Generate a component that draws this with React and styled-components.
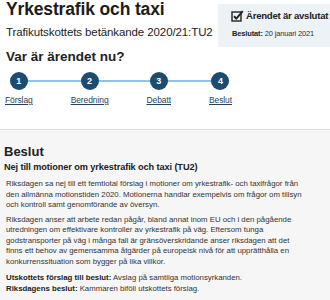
import React from "react";
import styled, { createGlobalStyle } from "styled-components";

const Global = createGlobalStyle`
  html, body { margin: 0; padding: 0; background: #fff; }
  body { font-family: "Liberation Sans", Arial, sans-serif; color: #222; width: 330px; height: 300px; overflow: hidden; }
`;

const Page = styled.div`
  width: 330px;
`;

const Top = styled.header`
  display: flex;
  justify-content: space-between;
  align-items: flex-start;
`;

const TitleBlock = styled.div`
  padding: 0 0 0 6px;
`;

const Title = styled.h1`
  margin: 0;
  font-size: 17.5px;
  line-height: 19px;
  font-weight: 700;
  color: #1c1c1c;
  letter-spacing: -0.15px;
`;

const Subtitle = styled.div`
  margin-top: 7px;
  font-size: 11.5px;
  line-height: 13px;
  color: #222;
  letter-spacing: -0.1px;
`;

const StatusBox = styled.aside`
  margin-top: 4px;
  width: 98px;
  height: 38px;
  padding: 5px 0 0 14px;
  box-sizing: content-box;
  background: #edf2f7;
`;

const StatusHead = styled.div`
  display: flex;
  align-items: center;
  gap: 2px;
  margin-left: -1px;
  font-size: 9.6px;
  line-height: 13px;
  font-weight: 700;
  color: #222;
  letter-spacing: -0.25px;
  white-space: nowrap;
`;

const StatusDate = styled.div`
  margin-top: 7px;
  font-size: 7.5px;
  line-height: 10px;
  color: #333;
  white-space: nowrap;
  letter-spacing: -0.15px;
  b { font-weight: 700; color: #222; }
`;

const Heading = styled.h2`
  margin: 2px 0 0 6px;
  font-size: 13.5px;
  line-height: 16px;
  font-weight: 700;
  color: #222;
`;

const Stepper = styled.ol`
  position: relative;
  display: inline-flex;
  gap: 38px;
  list-style: none;
  margin: 7px 0 0 5px;
  padding: 0;
  &::before {
    content: "";
    position: absolute;
    left: 14px;
    right: 12px;
    top: 8px;
    height: 2px;
    background: #8fc3ea;
  }
`;

const Step = styled.li`
  position: relative;
  display: flex;
  flex-direction: column;
  align-items: center;
`;

const Circle = styled.span`
  width: 18px;
  height: 18px;
  border-radius: 50%;
  background: #1c4c70;
  color: #fff;
  font-size: 9px;
  font-weight: 700;
  display: flex;
  align-items: center;
  justify-content: center;
`;

const StepLink = styled.a`
  margin-top: 5px;
  font-size: 8.5px;
  line-height: 10px;
  color: #1f4460;
  text-decoration: underline;
  letter-spacing: -0.1px;
`;

const Section = styled.section`
  margin-top: 24px;
  border-top: 1px solid #dcdcdc;
  background: #f6f6f6;
  padding: 14px 6px 20px 4px;
  min-height: 200px;
`;

const SectionTitle = styled.h3`
  margin: 0;
  font-size: 13px;
  line-height: 15px;
  font-weight: 700;
  color: #222;
`;

const Lead = styled.h4`
  margin: 2px 0 0;
  font-size: 9.2px;
  line-height: 12px;
  font-weight: 700;
  color: #222;
  letter-spacing: -0.1px;
`;

const Para = styled.p`
  margin: ${(p) => (p.$gap === "none" ? "0" : p.$gap === "big" ? "6px 0 0" : "4px 0 0")};
  width: 298px;
  padding-left: 2px;
  font-size: 7.8px;
  line-height: 10.5px;
  color: #333;
  b { color: #222; }
`;

const FirstPara = styled(Para)`
  margin-top: 6px;
`;

const CheckIcon = () => (
  <svg width="13" height="12" viewBox="0 0 13 12" aria-hidden="true">
    <rect x="1" y="2" width="9" height="9" fill="none" stroke="#222" strokeWidth="1.4" />
    <path d="M3 6.2 L5.3 8.6 L11.8 1.2" fill="none" stroke="#222" strokeWidth="2" />
  </svg>
);

const steps = ["Förslag", "Beredning", "Debatt", "Beslut"];

export default function App() {
  return (
    <Page>
      <Global />
      <Top>
        <TitleBlock>
          <Title>Yrkestrafik och taxi</Title>
          <Subtitle>Trafikutskottets betänkande 2020/21:TU2</Subtitle>
        </TitleBlock>
        <StatusBox>
          <StatusHead>
            <CheckIcon />
            Ärendet är avslutat
          </StatusHead>
          <StatusDate>
            <b>Beslutat:</b> 20 januari 2021
          </StatusDate>
        </StatusBox>
      </Top>
      <Heading>Var är ärendet nu?</Heading>
      <Stepper>
        {steps.map((s, i) => (
          <Step key={s}>
            <Circle>{i + 1}</Circle>
            <StepLink href="#">{s}</StepLink>
          </Step>
        ))}
      </Stepper>
      <Section>
        <SectionTitle>Beslut</SectionTitle>
        <Lead>Nej till motioner om yrkestrafik och taxi (TU2)</Lead>
        <FirstPara>
          Riksdagen sa nej till ett femtiotal förslag i motioner om yrkestrafik- och taxifrågor från
          den allmänna motionstiden 2020. Motionerna handlar exempelvis om frågor om tillsyn och
          kontroll samt genomförande av översyn.
        </FirstPara>
        <Para>
          Riksdagen anser att arbete redan pågår, bland annat inom EU och i den pågående
          utredningen om effektivare kontroller av yrkestrafik på väg. Eftersom tunga
          godstransporter på väg i många fall är gränsöverskridande anser riksdagen att det
          finns ett behov av gemensamma åtgärder på europeisk nivå för att upprätthålla en
          konkurrenssituation som bygger på lika villkor.
        </Para>
        <Para $gap="big">
          <b>Utskottets förslag till beslut:</b> Avslag på samtliga motionsyrkanden.
        </Para>
        <Para $gap="none">
          <b>Riksdagens beslut:</b> Kammaren biföll utskottets förslag.
        </Para>
      </Section>
    </Page>
  );
}
